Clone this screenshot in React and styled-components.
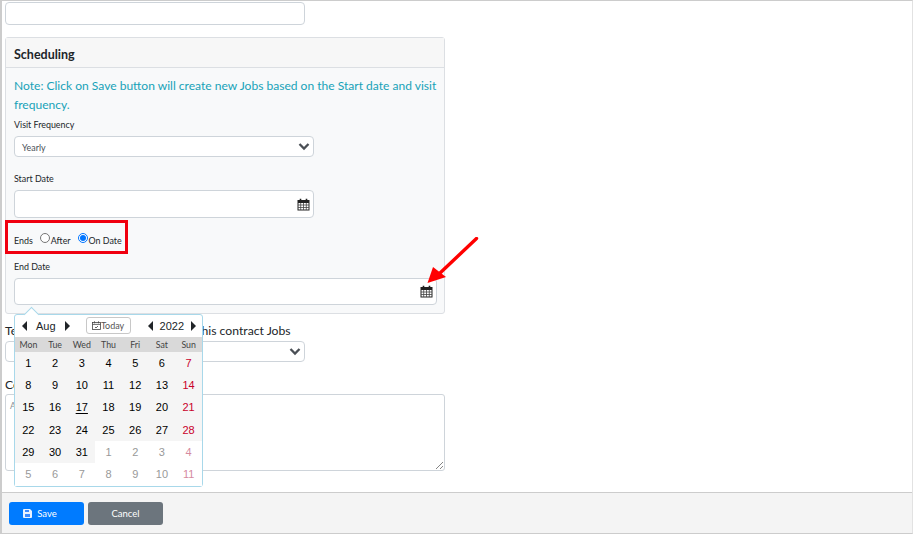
import React from "react";
import styled, { createGlobalStyle } from "styled-components";

const Global = createGlobalStyle`
  html, body { margin: 0; padding: 0; background: #fff; }
  * { box-sizing: border-box; }
  body { font-family: Lato, "Open Sans", "Liberation Sans", sans-serif; color: #212529; }
`;
const Page = styled.div`
  position: relative; width: 913px; height: 534px; overflow: hidden;
  display: flex; flex-direction: column;
  border-top: 1px solid #ccc; border-left: 2px solid #ccc; border-right: 1px solid #e2e2e2; border-bottom: 1px solid #ccc;
`;
const Main = styled.div`
  flex: 1; padding: 1px 3px 0; position: relative;
`;
const TopInput = styled.div`
  width: 300px; height: 23px; background: #fff; border: 1px solid #ced4da; border-radius: 4px;
`;
const Card = styled.section`
  width: 440px; height: 277px; margin-top: 12px; background: #f8f9fa;
  border: 1px solid #dcdfe3; border-radius: 3px;
`;
const CardHeader = styled.h2`
  margin: 0; height: 30px; padding: 3px 8px 0; display: flex; align-items: center;
  font-size: 12.5px; font-weight: 700; color: #212529; background: #f7f7f7; border-bottom: 1px solid #dcdfe3;
`;
const CardBody = styled.div`
  padding: 8px 8px 0;
`;
const Note = styled.p`
  margin: 0; color: #17a2b8; font-size: 12.05px; line-height: 19px; width: 426px;
`;
const Label = styled.div`
  font-size: 8.9px; line-height: 12px; color: #212529; margin-top: ${p => p.$mt || 0}px;
`;
const Field = styled.div`
  width: ${p => p.$w}px; height: ${p => p.$h}px; margin-top: ${p => p.$mt || 0}px; background: #fff;
  border: 1px solid #ced4da; border-radius: 4px; display: flex; align-items: center; justify-content: space-between;
  padding: 0 ${p => p.$pr ?? 3}px 0 7px;
`;
const FieldValue = styled.span`
  font-size: 8.9px; color: #495057; margin-top: 2px;
`;
const EndsRow = styled.div`
  display: flex; align-items: center; height: 12px; margin-top: 16px; font-size: 8.9px; color: #212529;
`;
const RadioCircle = styled.span`
  display: inline-block; width: 10px; height: 10px; border-radius: 50%; margin: -4px 1px 0 ${p => p.$ml}px; background: #fff;
  border: 1px solid ${p => p.$on ? "#0075ff" : "#767676"};
  position: relative;
  ${p => p.$on && `&::after { content: ""; position: absolute; inset: 1px; border-radius: 50%; background: #0075ff; }`}
`;
const Highlight = styled.div`
  position: absolute; left: 3px; top: 219px; width: 123px; height: 34px; border: 3px solid #f0000f; pointer-events: none;
`;
const ArrowOverlay = styled.svg`
  position: absolute; left: 425px; top: 236px;
`;
const BelowLabel = styled.div`
  font-size: 12.2px; line-height: 16px; color: #212529; margin-top: ${p => p.$mt}px; white-space: nowrap;
`;
const Placeholder = styled.span`
  font-size: 8.9px; color: #8b9096; align-self: flex-start; padding-top: 5px;
`;
const TextArea = styled.div`
  position: relative; width: 440px; height: 77px; margin-top: 1px; background: #fff; border: 1px solid #ced4da; border-radius: 3px;
  display: flex; padding: 0 0 0 4px;
`;
const Grip = styled.svg`
  position: absolute; right: 0; bottom: 0;
`;
const Footer = styled.footer`
  height: 41px; background: #f4f4f4; border-top: 1px solid #ccc; display: flex; align-items: center; gap: 4px; padding: 0 0 0 7px;
`;
const Button = styled.button`
  width: 75px; height: 23px; border: 0; border-radius: 3px; background: ${p => p.$bg}; color: #fff;
  font: inherit; font-size: 9.5px; display: flex; align-items: center; justify-content: center; gap: 5px; padding: 0 ${p => p.$pr || 0}px 0 0;
`;
const Calendar = styled.div`
  position: absolute; left: 12px; top: 313px; width: 189px; height: 173px; background: #fff;
  border: 1px solid #a8d8ea; border-radius: 3px; font-family: "Liberation Sans", Arial, sans-serif;
  &::before {
    content: ""; position: absolute; left: 11px; top: -6px; width: 10px; height: 10px; background: #fff;
    border-left: 1px solid #a8d8ea; border-top: 1px solid #a8d8ea; transform: rotate(45deg);
  }
`;
const CalHeader = styled.div`
  position: relative; height: 22px; display: flex; align-items: center; font-size: 11px; color: #212529; padding-bottom: 1px;
`;
const Nav = styled.div`
  display: flex; align-items: center; margin-left: ${p => p.$ml}px; gap: ${p => p.$gap}px;
`;
const Tri = styled.span`
  width: 0; height: 0; border-top: 5px solid transparent; border-bottom: 5px solid transparent;
  ${p => p.$right ? "border-left: 5px solid #212529;" : "border-right: 5px solid #212529;"}
`;
const Today = styled.div`
  margin-left: 16px; width: 45px; height: 17px; border: 1px solid #c8c8c8; border-radius: 3px; background: #fff;
  display: flex; align-items: center; justify-content: center; font-family: Lato, sans-serif; font-size: 9px; color: #555;
`;
const WeekHead = styled.div`
  display: grid; grid-template-columns: repeat(7, 1fr); height: 15px; background: #d9d9d9; align-items: center;
`;
const WeekDay = styled.span`
  text-align: center; font-family: Lato, sans-serif; font-size: 8.8px; color: #444;
`;
const Days = styled.div`
  display: grid; grid-template-columns: repeat(7, 1fr); grid-auto-rows: 22.3px;
`;
const Day = styled.span`
  display: flex; align-items: center; justify-content: center; font-size: 11px; padding-bottom: 1px;
  background: ${p => p.$in ? "#f5f5f5" : "#fff"};
  color: ${p => p.$in ? (p.$sun ? "#c9002b" : "#000") : (p.$sun ? "#d58aa0" : "#999")};
  & > u { text-underline-offset: 2px; }
`;

const CalIcon = () => (
  <svg width="13" height="13" viewBox="0 0 13 13" fill="none">
    <rect x="1" y="2.5" width="11" height="9.5" fill="#fff" stroke="#222" />
    <rect x="1" y="2" width="11" height="3" fill="#222" />
    <path d="M1 7h11M1 9.5h11M3.7 5v7M6.5 5v7M9.3 5v7" stroke="#444" strokeWidth="0.8" />
    <path d="M3.5 .8v2.4M9.5 .8v2.4" stroke="#222" strokeWidth="1.6" />
  </svg>
);
const Chevron = () => (
  <svg width="12" height="9" viewBox="0 0 12 9"><path d="M1.5 2l4.5 4.5L10.5 2" fill="none" stroke="#4a4f55" strokeWidth="2.3" /></svg>
);
const SaveIcon = () => (
  <svg width="9" height="9" viewBox="0 0 9 9">
    <path d="M0 1a1 1 0 0 1 1-1h6l2 2v6a1 1 0 0 1-1 1H1a1 1 0 0 1-1-1z" fill="#eaf2ff" />
    <rect x="2" y="1" width="4" height="2" fill="#3d8bff" />
    <rect x="2" y="5" width="5" height="3" fill="#3d8bff" />
  </svg>
);
const TodayIcon = () => (
  <svg width="9" height="9" viewBox="0 0 9 9" fill="none" stroke="#444" strokeWidth="0.8">
    <rect x=".5" y="1.5" width="8" height="7" /><path d="M.5 3.4h8M2.5 .3v2M6.5 .3v2M3 6l1 1 2-2" />
  </svg>
);

const weeks = [
  [1,2,3,4,5,6,7],[8,9,10,11,12,13,14],[15,16,17,18,19,20,21],[22,23,24,25,26,27,28],
  [29,30,31,1,2,3,4],[5,6,7,8,9,10,11],
];

export default function App() {
  return (
    <Page>
      <Global />
      <Main>
        <TopInput />
        <Card>
          <CardHeader>Scheduling</CardHeader>
          <CardBody>
            <Note>Note: Click on Save button will create new Jobs based on the Start date and visit frequency.</Note>
            <Label $mt={5}>Visit Frequency</Label>
            <Field $w={300} $h={21} $mt={5}><FieldValue>Yearly</FieldValue><Chevron /></Field>
            <Label $mt={16}>Start Date</Label>
            <Field $w={300} $h={28} $mt={5}><span /><CalIcon /></Field>
            <EndsRow>
              Ends<RadioCircle $ml={7} />After<RadioCircle $ml={7} $on />On Date
            </EndsRow>
            <Label $mt={15}>End Date</Label>
            <Field $w={423} $h={27} $mt={5}><span /><CalIcon /></Field>
          </CardBody>
        </Card>
        <BelowLabel $mt={9}>Technicians Team to be assigned on this contract Jobs</BelowLabel>
        <Field $w={300} $h={21} $mt={2}><span /><Chevron /></Field>
        <BelowLabel $mt={15}>Comments</BelowLabel>
        <TextArea>
          <Placeholder>Add comments</Placeholder>
          <Grip width="10" height="10" viewBox="0 0 10 10"><path d="M2 9l7-7M6 9l3-3" stroke="#666" strokeWidth="0.8" /></Grip>
        </TextArea>
      </Main>
      <Footer>
        <Button $bg="#007bff" $pr={13}><SaveIcon />Save</Button>
        <Button $bg="#6c757d">Cancel</Button>
      </Footer>
      <Calendar>
        <CalHeader>
          <Nav $ml={7} $gap={9}><Tri />Aug<Tri $right /></Nav>
          <Today><TodayIcon />Today</Today>
          <Nav $ml={17} $gap={7}><Tri />2022<Tri $right /></Nav>
        </CalHeader>
        <WeekHead>
          {["Mon","Tue","Wed","Thu","Fri","Sat","Sun"].map(d => <WeekDay key={d}>{d}</WeekDay>)}
        </WeekHead>
        <Days>
          {weeks.flatMap((w, wi) => w.map((d, di) => {
            const inMonth = wi < 4 || (wi === 4 && di < 3);
            return <Day key={`${wi}-${di}`} $in={inMonth} $sun={di === 6}>{d === 17 ? <u>{d}</u> : d}</Day>;
          }))}
        </Days>
      </Calendar>
      <Highlight />
      <ArrowOverlay width="56" height="52" viewBox="0 0 56 52">
        <path d="M49.5 1.5L12 37" stroke="#f00" strokeWidth="3.4" strokeLinecap="round" />
        <path d="M0.5 46L6 30l13 10z" fill="#f00" />
      </ArrowOverlay>
    </Page>
  );
}
